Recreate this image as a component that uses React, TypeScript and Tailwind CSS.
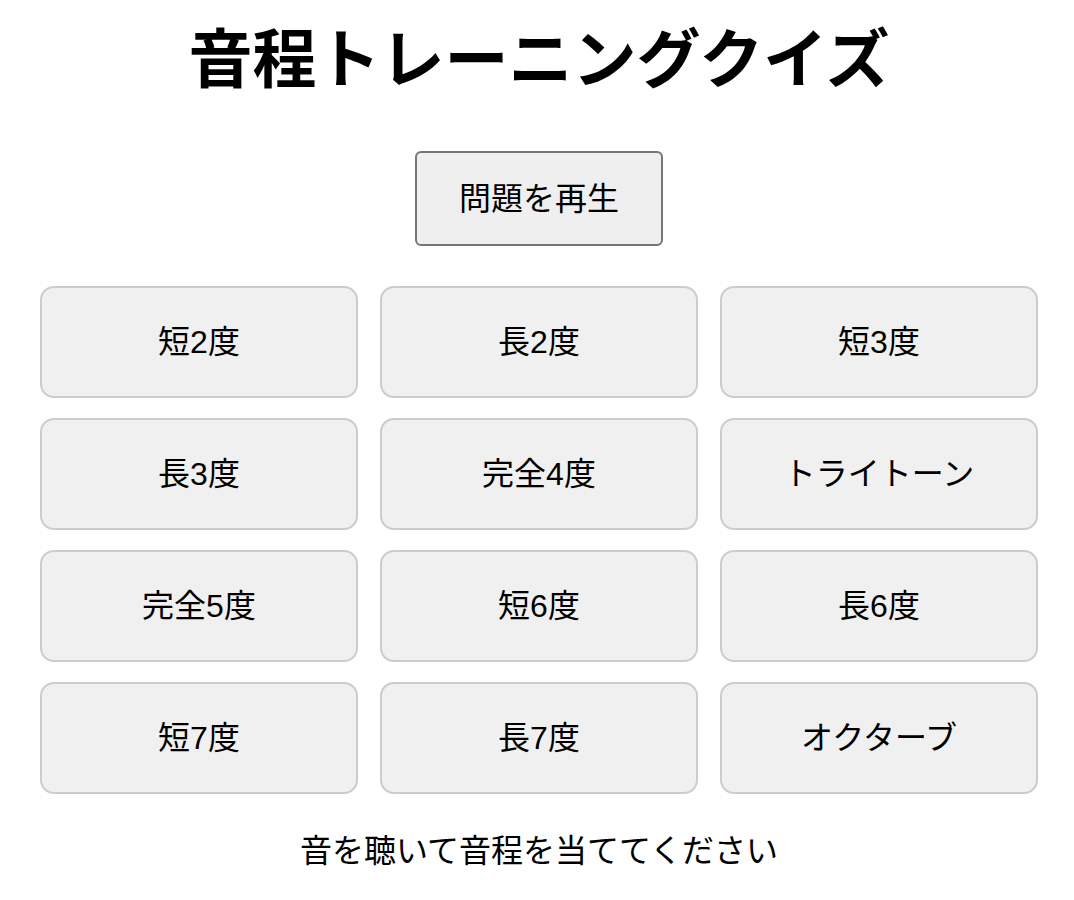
const intervals = [
  '短2度',
  '長2度',
  '短3度',
  '長3度',
  '完全4度',
  'トライトーン',
  '完全5度',
  '短6度',
  '長6度',
  '短7度',
  '長7度',
  'オクターブ',
];

export default function App() {
  return (
    <div
      className="flex flex-col items-center bg-white pl-[4px] text-black"
      style={{ fontFamily: '"Liberation Sans", "Noto Sans CJK JP", sans-serif' }}
    >
      <h1 className="mt-[14px] text-[64px] font-bold leading-[92px]">音程トレーニングクイズ</h1>
      <button className="mt-[45px] h-[95px] rounded-[6px] border-2 border-[#767676] bg-[#efefef] px-[42px] text-[32px]">
        問題を再生
      </button>
      <div className="mt-[40px] grid w-[998px] grid-cols-3 gap-x-[22px] gap-y-[20px]">
        {intervals.map((name) => (
          <button
            key={name}
            className="h-[112px] rounded-[14px] border-2 border-[#cccccc] bg-[#f0f0f0] text-[32px]"
          >
            {name}
          </button>
        ))}
      </div>
      <p className="mt-[34px] text-[32px] leading-[46px]">音を聴いて音程を当ててください</p>
    </div>
  );
}
